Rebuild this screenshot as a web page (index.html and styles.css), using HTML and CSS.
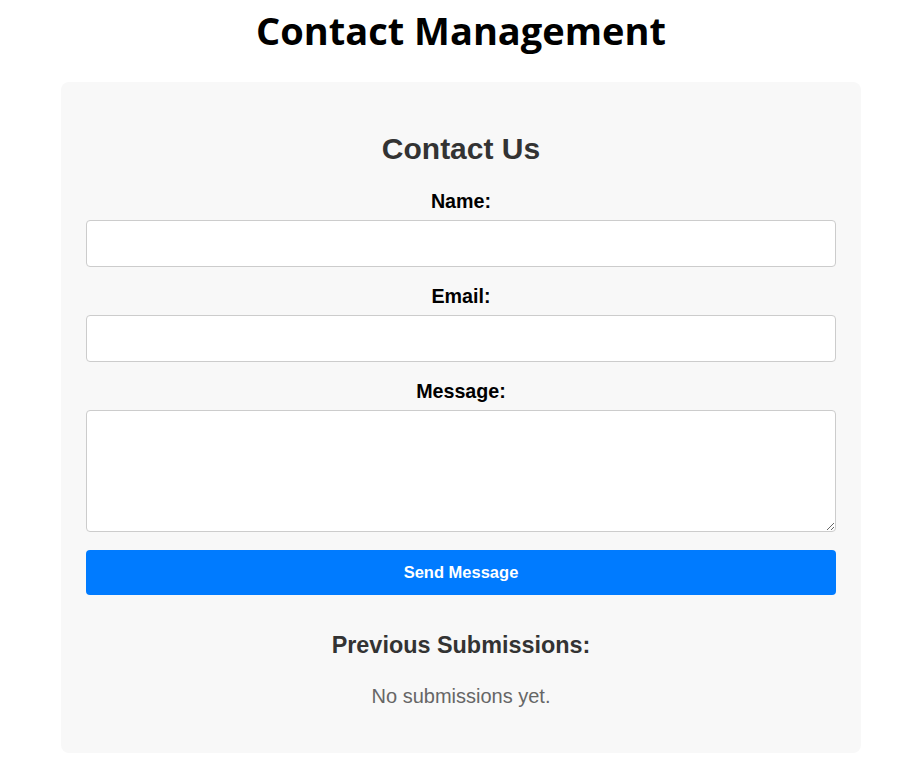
FILE: index.html
```html
<!DOCTYPE html>
<html>
<head>
<meta charset="utf-8">
<title>Contact Management</title>
<link rel="stylesheet" href="styles.css">
</head>
<body>
<h1 class="page-title">Contact Management</h1>
<div class="card">
  <h2 class="card-title">Contact Us</h2>
  <form class="form">
    <div class="field">
      <label class="label" for="name">Name:</label>
      <input class="input" id="name" type="text">
    </div>
    <div class="field">
      <label class="label" for="email">Email:</label>
      <input class="input" id="email" type="email">
    </div>
    <div class="field">
      <label class="label" for="message">Message:</label>
      <textarea class="input textarea" id="message"></textarea>
    </div>
    <button class="button" type="button">Send Message</button>
  </form>
  <h3 class="sub-title">Previous Submissions:</h3>
  <p class="empty">No submissions yet.</p>
</div>
</body>
</html>
```
FILE: styles.css
```css
html, body {
  background: #ffffff;
}
body {
  margin: 0 0 0 8px;
  font-family: "Liberation Sans", Arial, sans-serif;
}
.page-title {
  font-family: "Open Sans", sans-serif;
  font-weight: 700;
  font-size: 38px;
  text-align: center;
  margin: 0 0 26px;
  padding-top: 4px;
  line-height: 52px;
  color: #000;
}
.card {
  width: 800px;
  box-sizing: border-box;
  margin: 0 auto;
  background: #f8f8f8;
  border-radius: 8px;
  padding: 25px 25px 46px;
}
.card-title {
  text-align: center;
  color: #333;
  font-size: 30px;
  margin: 25px 0 24px;
  line-height: 34px;
}
.form {
  display: flex;
  flex-direction: column;
}
.field {
  display: flex;
  flex-direction: column;
  align-items: stretch;
  margin-bottom: 18px;
}
.label {
  text-align: center;
  font-weight: 700;
  font-size: 19.7px;
  color: #000;
  line-height: 22px;
  margin-bottom: 8px;
}
.input {
  height: 47px;
  box-sizing: border-box;
  border: 1px solid #ccc;
  border-radius: 4px;
  background: #fff;
  font-family: inherit;
  font-size: 16px;
  padding: 10px;
}
.textarea {
  height: 122px;
  resize: vertical;
}
.button {
  margin: 0;
  height: 45px;
  border: none;
  border-radius: 4px;
  background: #007bff;
  color: #fff;
  font-family: "Liberation Sans", Arial, sans-serif;
  font-weight: 700;
  font-size: 16.5px;
}
.sub-title {
  text-align: center;
  color: #333;
  font-size: 23.4px;
  margin: 37px 0 0;
  line-height: 26px;
}
.empty {
  text-align: center;
  color: #666;
  font-size: 20px;
  margin: 27px 0 0;
  line-height: 22px;
}
```
